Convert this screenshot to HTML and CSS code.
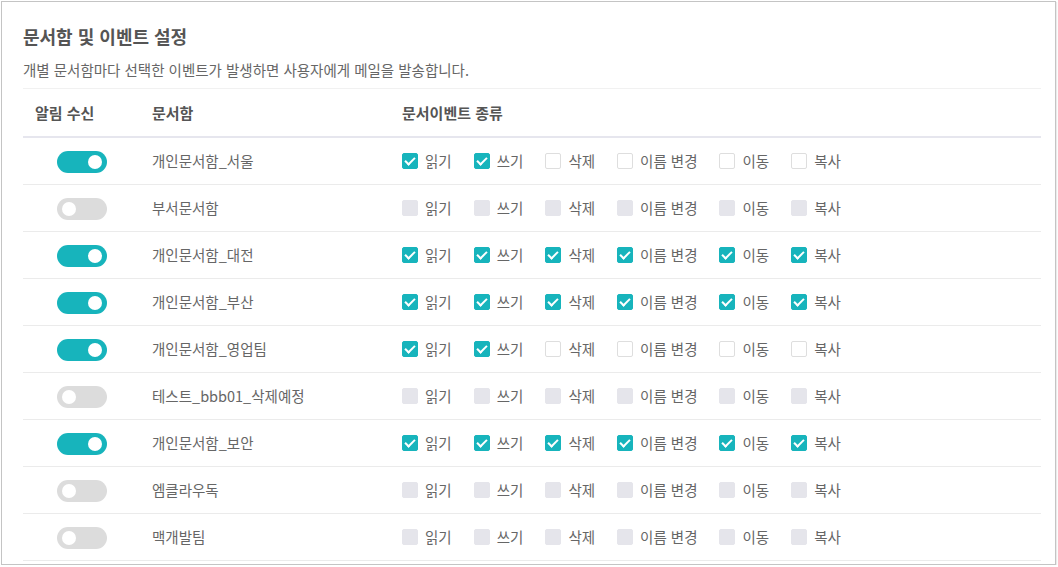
FILE: index.html
```html
<!DOCTYPE html>
<html lang="ko">
<head>
    <meta charset="UTF-8">
    <meta name="viewport" content="width=device-width, initial-scale=1.0">
    <title>문서함 및 이벤트 설정</title>
    <link rel="stylesheet" href="styles.css">
</head>
<body>
    <div class="panel">
        <h1>문서함 및 이벤트 설정</h1>
        <p class="desc">개별 문서함마다 선택한 이벤트가 발생하면 사용자에게 메일을 발송합니다.</p>
        <table class="event-table">
            <colgroup>
                <col class="col-alarm">
                <col class="col-box">
                <col>
            </colgroup>
            <thead>
                <tr>
                    <th>알림 수신</th>
                    <th>문서함</th>
                    <th>문서이벤트 종류</th>
                </tr>
            </thead>
            <tbody>
                <tr>
                    <td class="alarm"><label class="switch"><input type="checkbox" checked><span class="slider"></span></label></td>
                    <td>개인문서함_서울</td>
                    <td><div class="ev-list">
                        <label class="ev"><input type="checkbox" checked>읽기</label>
                        <label class="ev"><input type="checkbox" checked>쓰기</label>
                        <label class="ev"><input type="checkbox">삭제</label>
                        <label class="ev"><input type="checkbox">이름 변경</label>
                        <label class="ev"><input type="checkbox">이동</label>
                        <label class="ev"><input type="checkbox">복사</label>
                    </div></td>
                </tr>
                <tr>
                    <td class="alarm"><label class="switch"><input type="checkbox"><span class="slider"></span></label></td>
                    <td>부서문서함</td>
                    <td><div class="ev-list">
                        <label class="ev"><input type="checkbox" disabled>읽기</label>
                        <label class="ev"><input type="checkbox" disabled>쓰기</label>
                        <label class="ev"><input type="checkbox" disabled>삭제</label>
                        <label class="ev"><input type="checkbox" disabled>이름 변경</label>
                        <label class="ev"><input type="checkbox" disabled>이동</label>
                        <label class="ev"><input type="checkbox" disabled>복사</label>
                    </div></td>
                </tr>
                <tr>
                    <td class="alarm"><label class="switch"><input type="checkbox" checked><span class="slider"></span></label></td>
                    <td>개인문서함_대전</td>
                    <td><div class="ev-list">
                        <label class="ev"><input type="checkbox" checked>읽기</label>
                        <label class="ev"><input type="checkbox" checked>쓰기</label>
                        <label class="ev"><input type="checkbox" checked>삭제</label>
                        <label class="ev"><input type="checkbox" checked>이름 변경</label>
                        <label class="ev"><input type="checkbox" checked>이동</label>
                        <label class="ev"><input type="checkbox" checked>복사</label>
                    </div></td>
                </tr>
                <tr>
                    <td class="alarm"><label class="switch"><input type="checkbox" checked><span class="slider"></span></label></td>
                    <td>개인문서함_부산</td>
                    <td><div class="ev-list">
                        <label class="ev"><input type="checkbox" checked>읽기</label>
                        <label class="ev"><input type="checkbox" checked>쓰기</label>
                        <label class="ev"><input type="checkbox" checked>삭제</label>
                        <label class="ev"><input type="checkbox" checked>이름 변경</label>
                        <label class="ev"><input type="checkbox" checked>이동</label>
                        <label class="ev"><input type="checkbox" checked>복사</label>
                    </div></td>
                </tr>
                <tr>
                    <td class="alarm"><label class="switch"><input type="checkbox" checked><span class="slider"></span></label></td>
                    <td>개인문서함_영업팀</td>
                    <td><div class="ev-list">
                        <label class="ev"><input type="checkbox" checked>읽기</label>
                        <label class="ev"><input type="checkbox" checked>쓰기</label>
                        <label class="ev"><input type="checkbox">삭제</label>
                        <label class="ev"><input type="checkbox">이름 변경</label>
                        <label class="ev"><input type="checkbox">이동</label>
                        <label class="ev"><input type="checkbox">복사</label>
                    </div></td>
                </tr>
                <tr>
                    <td class="alarm"><label class="switch"><input type="checkbox"><span class="slider"></span></label></td>
                    <td>테스트_bbb01_삭제예정</td>
                    <td><div class="ev-list">
                        <label class="ev"><input type="checkbox" disabled>읽기</label>
                        <label class="ev"><input type="checkbox" disabled>쓰기</label>
                        <label class="ev"><input type="checkbox" disabled>삭제</label>
                        <label class="ev"><input type="checkbox" disabled>이름 변경</label>
                        <label class="ev"><input type="checkbox" disabled>이동</label>
                        <label class="ev"><input type="checkbox" disabled>복사</label>
                    </div></td>
                </tr>
                <tr>
                    <td class="alarm"><label class="switch"><input type="checkbox" checked><span class="slider"></span></label></td>
                    <td>개인문서함_보안</td>
                    <td><div class="ev-list">
                        <label class="ev"><input type="checkbox" checked>읽기</label>
                        <label class="ev"><input type="checkbox" checked>쓰기</label>
                        <label class="ev"><input type="checkbox" checked>삭제</label>
                        <label class="ev"><input type="checkbox" checked>이름 변경</label>
                        <label class="ev"><input type="checkbox" checked>이동</label>
                        <label class="ev"><input type="checkbox" checked>복사</label>
                    </div></td>
                </tr>
                <tr>
                    <td class="alarm"><label class="switch"><input type="checkbox"><span class="slider"></span></label></td>
                    <td>엠클라우독</td>
                    <td><div class="ev-list">
                        <label class="ev"><input type="checkbox" disabled>읽기</label>
                        <label class="ev"><input type="checkbox" disabled>쓰기</label>
                        <label class="ev"><input type="checkbox" disabled>삭제</label>
                        <label class="ev"><input type="checkbox" disabled>이름 변경</label>
                        <label class="ev"><input type="checkbox" disabled>이동</label>
                        <label class="ev"><input type="checkbox" disabled>복사</label>
                    </div></td>
                </tr>
                <tr>
                    <td class="alarm"><label class="switch"><input type="checkbox"><span class="slider"></span></label></td>
                    <td>맥개발팀</td>
                    <td><div class="ev-list">
                        <label class="ev"><input type="checkbox" disabled>읽기</label>
                        <label class="ev"><input type="checkbox" disabled>쓰기</label>
                        <label class="ev"><input type="checkbox" disabled>삭제</label>
                        <label class="ev"><input type="checkbox" disabled>이름 변경</label>
                        <label class="ev"><input type="checkbox" disabled>이동</label>
                        <label class="ev"><input type="checkbox" disabled>복사</label>
                    </div></td>
                </tr>
            </tbody>
        </table>
    </div>
</body>
</html>
```

FILE: styles.css
```css
body {
    margin: 0;
    font-family: "Noto Sans CJK KR", "Noto Sans", sans-serif;
    background-color: #fff;
    color: #666;
}
.panel {
    box-sizing: border-box;
    width: 1055px;
    height: 564px;
    margin: 1px 0 0 1px;
    padding: 21px 14px 0 21px;
    border: 1px solid #c4c4c4;
    box-shadow: 1px 1px 1px rgba(0, 0, 0, 0.08);
    overflow: hidden;
}
h1 {
    margin: 0;
    font-size: 18px;
    line-height: 26px;
    font-weight: bold;
    color: #555;
}
.desc {
    margin: 10px 0 8px 0;
    font-size: 14.5px;
    line-height: 21px;
    color: #666;
}
.event-table {
    width: 100%;
    border-collapse: collapse;
    table-layout: fixed;
}
.col-alarm {
    width: 117px;
}
.col-box {
    width: 250px;
}
th {
    height: 47px;
    padding: 0 12px;
    text-align: left;
    font-size: 15px;
    font-weight: bold;
    color: #555;
    border-top: 1px solid #f1f1f1;
    border-bottom: 2px solid #e6e6ee;
}
td {
    height: 46px;
    padding: 0 12px;
    font-size: 14.5px;
    line-height: 20px;
    color: #666;
    border-bottom: 1px solid #ebebeb;
}
td.alarm {
    padding: 0;
    text-align: center;
}

/* toggle switch */
.switch {
    position: relative;
    display: inline-block;
    width: 50px;
    height: 22px;
    vertical-align: middle;
}
.switch input {
    display: none;
}
.slider {
    position: absolute;
    inset: 0;
    border-radius: 11px;
    background-color: #dcdcdc;
}
.slider:before {
    content: "";
    position: absolute;
    left: 5px;
    top: 4px;
    width: 14px;
    height: 14px;
    border-radius: 50%;
    background-color: #fff;
}
.switch input:checked + .slider {
    background-color: #17b4bc;
}
.switch input:checked + .slider:before {
    left: 31px;
}

/* event checkboxes */
.ev-list {
    display: flex;
    align-items: center;
    gap: 22px;
    white-space: nowrap;
}
.ev {
    display: flex;
    align-items: center;
    gap: 7px;
}
.ev input {
    appearance: none;
    position: relative;
    width: 16px;
    height: 16px;
    margin: 0;
    box-sizing: border-box;
    border: 1px solid #dedede;
    border-radius: 2px;
    background-color: #fff;
}
.ev input:checked {
    border-color: #17b4bc;
    background-color: #17b4bc;
}
.ev input:checked:after {
    content: "";
    position: absolute;
    left: 4px;
    top: 1px;
    width: 4px;
    height: 8px;
    border-right: 2.5px solid #fff;
    border-bottom: 2.5px solid #fff;
    transform: rotate(45deg);
}
.ev input:disabled {
    border-color: #e5e5eb;
    background-color: #e5e5eb;
}
```
